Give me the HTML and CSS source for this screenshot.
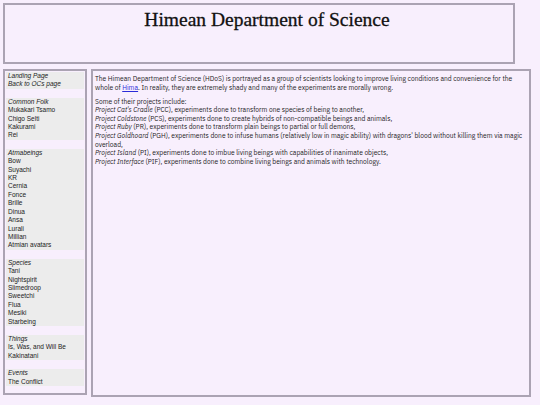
FILE: index.html
```html
<!DOCTYPE html>
<html lang="en">
<head>
  <meta charset="UTF-8">
  <title>Himean Department of Science</title>
  <link rel="stylesheet" href="styles.css">
</head>
<body>
  <div class="header">
    <h1>Himean Department of Science</h1>
  </div>

  <div class="main">
    <div class="sidebar">
      <div class="nav-group">
        <div class="nav-item nav-title">Landing Page</div>
        <div class="nav-item nav-title">Back to OCs page</div>
      </div>
      <div class="nav-group">
        <div class="nav-item nav-title">Common Folk</div>
        <div class="nav-item">Mukakari Tsamo</div>
        <div class="nav-item">Chigo Selti</div>
        <div class="nav-item">Kakurami</div>
        <div class="nav-item">Rei</div>
      </div>
      <div class="nav-group">
        <div class="nav-item nav-title">Atmabeings</div>
        <div class="nav-item">Bow</div>
        <div class="nav-item">Suyachi</div>
        <div class="nav-item">KR</div>
        <div class="nav-item">Cernia</div>
        <div class="nav-item">Fonce</div>
        <div class="nav-item">Brille</div>
        <div class="nav-item">Dinua</div>
        <div class="nav-item">Ansa</div>
        <div class="nav-item">Lurali</div>
        <div class="nav-item">Millian</div>
        <div class="nav-item">Atmian avatars</div>
      </div>
      <div class="nav-group">
        <div class="nav-item nav-title">Species</div>
        <div class="nav-item">Tani</div>
        <div class="nav-item">Nightspirit</div>
        <div class="nav-item">Slimedroop</div>
        <div class="nav-item">Sweetchi</div>
        <div class="nav-item">Flua</div>
        <div class="nav-item">Mesiki</div>
        <div class="nav-item">Starbeing</div>
      </div>
      <div class="nav-group">
        <div class="nav-item nav-title">Things</div>
        <div class="nav-item">Is, Was, and Will Be</div>
        <div class="nav-item">Kakinatani</div>
      </div>
      <div class="nav-group">
        <div class="nav-item nav-title">Events</div>
        <div class="nav-item">The Conflict</div>
      </div>
      <div class="nav-group">
        <div class="nav-item nav-title">Locations</div>
        <div class="nav-item">Hima</div>
      </div>
    </div>

    <div class="content">
      <p>The Himean Department of Science (HDoS) is portrayed as a group of scientists looking to improve living conditions and convenience for the whole of <a href="#">Hima</a>. In reality, they are extremely shady and many of the experiments are morally wrong.</p>
      <p>Some of their projects include:<br>
        <i>Project Cat's Cradle</i> (PCC), experiments done to transform one species of being to another,<br>
        <i>Project Coldstone</i> (PCS), experiments done to create hybrids of non-compatible beings and animals,<br>
        <i>Project Ruby</i> (PR), experiments done to transform plain beings to partial or full demons,<br>
        <i>Project Goldhoard</i> (PGH), experiments done to infuse humans (relatively low in magic ability) with dragons' blood without killing them via magic overload,<br>
        <i>Project Island</i> (PI), experiments done to imbue living beings with capabilities of inanimate objects,<br>
        <i>Project Interface</i> (PIF), experiments done to combine living beings and animals with technology.
      </p>
    </div>
  </div>
</body>
</html>
```

FILE: styles.css
```css
body {
  margin: 0;
  padding: 3px;
  background-color: #f8effd;
  color: #222;
}

.header {
  width: 508px;
  height: 57px;
  border: 2px solid #aba3b3;
  background-color: #f8effd;
}

.header h1 {
  margin: 0;
  padding-top: 4px;
  padding-left: 16px;
  text-align: center;
  font-family: "Liberation Serif", serif;
  font-weight: normal;
  font-size: 19.5px;
  color: #111;
  -webkit-text-stroke: 0.3px #111;
}

.main {
  display: flex;
  gap: 4px;
  margin-top: 5px;
}

.sidebar {
  width: 78px;
  height: 321px;
  border: 2px solid #aba3b3;
  padding: 1px 1px 0 1px;
  overflow: hidden;
  flex-shrink: 0;
  font-family: "Liberation Sans", Arial, sans-serif;
  font-size: 6.5px;
  line-height: 8.4px;
  color: #222;
}

.nav-group {
  background-color: #ececec;
  padding-left: 2px;
  margin-bottom: 9px;
}

.nav-title {
  font-style: italic;
}

.content {
  width: 434px;
  height: 316px;
  border: 2px solid #aba3b3;
  padding: 4px 0 4px 2px;
  flex-shrink: 0;
  font-family: "IBM Plex Sans", "Noto Sans", sans-serif;
  font-size: 6.7px;
  line-height: 8.6px;
  color: #1c1c1c;
}

.content p {
  margin: 0 0 5.4px 0;
}

.content a {
  color: #2a2ad8;
}
```
